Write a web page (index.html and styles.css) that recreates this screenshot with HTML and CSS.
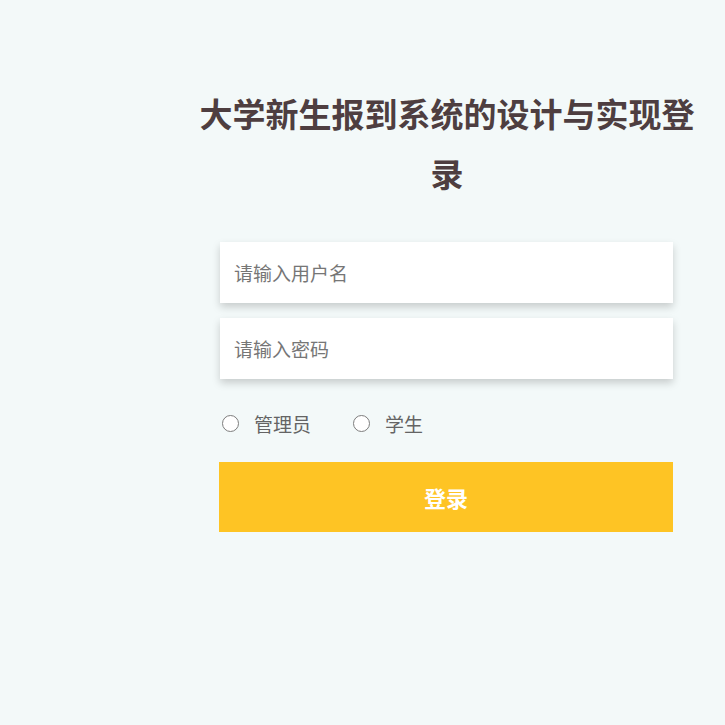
FILE: index.html
```html
<!DOCTYPE html>
<html>

<head>
    <title>登录</title>
    <meta charset="utf-8">
    <meta name="viewport" content="width=device-width">
    <link rel="stylesheet" href="styles.css">
</head>

<body>
    <div id="container">
        <div id="login-box">
            <h1 id="title">大学新生报到系统的设计与实现登录</h1>
            <form id="login-form">
                <input class="field" type="text" placeholder="请输入用户名">
                <input class="field" type="password" placeholder="请输入密码">
                <div id="roles">
                    <label class="role"><input type="radio" name="role"><span>管理员</span></label>
                    <label class="role"><input type="radio" name="role"><span>学生</span></label>
                </div>
                <button id="login-btn" type="button">登录</button>
            </form>
        </div>
    </div>
</body>

</html>
```

FILE: styles.css
```css
html, body {
    width: 100%;
    height: 100%;
    margin: 0px;
    background-color: rgb(243, 249, 249);
    font-family: "Noto Sans CJK SC", "Noto Sans", sans-serif;
}
#container {
    display: flex;
    padding-left: 196px;
    padding-top: 83px;
}
#login-box {
    width: 502px;
}
#title {
    margin: 0px;
    font-size: 33px;
    line-height: 60px;
    font-weight: bold;
    color: rgb(78, 62, 64);
    text-align: center;
}
#login-form {
    display: flex;
    flex-direction: column;
    margin: 39px 25px 0px 24px;
}
.field {
    height: 61px;
    border: none;
    outline: none;
    background-color: white;
    padding: 0px 14px;
    font-family: inherit;
    font-size: 19px;
    color: rgb(80, 80, 80);
    box-shadow: 0px 4px 8px rgba(0, 0, 0, 0.18);
    margin-bottom: 15px;
}
.field::placeholder {
    color: rgb(118, 118, 118);
}
#roles {
    display: flex;
    align-items: center;
    height: 58px;
}
.role {
    display: flex;
    align-items: center;
    margin-right: 40px;
    font-size: 19px;
    color: rgb(100, 100, 100);
}
.role input {
    appearance: none;
    width: 17px;
    height: 17px;
    margin: 0px 15px 0px 2px;
    border: 1px solid rgb(125, 125, 125);
    border-radius: 50%;
    background-color: white;
}
#login-btn {
    margin-top: 10px;
    margin-left: -1px;
    height: 70px;
    border: none;
    background-color: rgb(254, 196, 36);
    color: white;
    font-family: inherit;
    font-size: 22px;
    font-weight: bold;
    padding-bottom: 2px;
}
```
